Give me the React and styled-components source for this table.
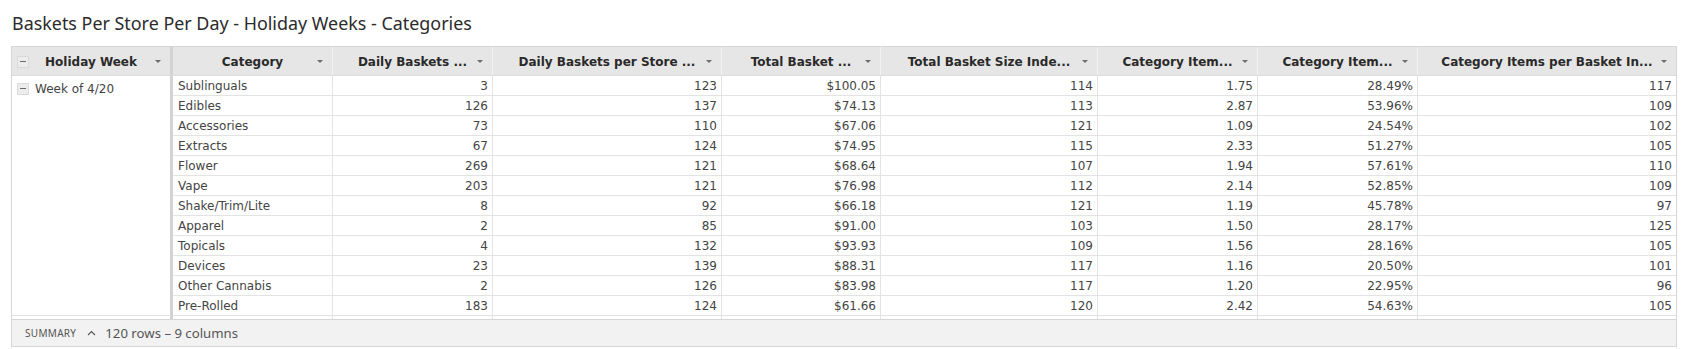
import React from "react";
import styled, { createGlobalStyle } from "styled-components";

const GlobalStyle = createGlobalStyle`
  html, body { margin: 0; padding: 0; background: #ffffff; }
  body { font-family: "DejaVu Sans", Verdana, sans-serif; }
`;

const COLS = [160, 160, 229, 159, 217, 160, 160, 258];

const columns = [
  { label: "Category" },
  { label: "Daily Baskets ..." },
  { label: "Daily Baskets per Store ..." },
  { label: "Total Basket ..." },
  { label: "Total Basket Size Inde..." },
  { label: "Category Item..." },
  { label: "Category Item..." },
  { label: "Category Items per Basket In..." },
];

const rows = [
  ["Sublinguals", "3", "123", "$100.05", "114", "1.75", "28.49%", "117"],
  ["Edibles", "126", "137", "$74.13", "113", "2.87", "53.96%", "109"],
  ["Accessories", "73", "110", "$67.06", "121", "1.09", "24.54%", "102"],
  ["Extracts", "67", "124", "$74.95", "115", "2.33", "51.27%", "105"],
  ["Flower", "269", "121", "$68.64", "107", "1.94", "57.61%", "110"],
  ["Vape", "203", "121", "$76.98", "112", "2.14", "52.85%", "109"],
  ["Shake/Trim/Lite", "8", "92", "$66.18", "121", "1.19", "45.78%", "97"],
  ["Apparel", "2", "85", "$91.00", "103", "1.50", "28.17%", "125"],
  ["Topicals", "4", "132", "$93.93", "109", "1.56", "28.16%", "105"],
  ["Devices", "23", "139", "$88.31", "117", "1.16", "20.50%", "101"],
  ["Other Cannabis", "2", "126", "$83.98", "117", "1.20", "22.95%", "96"],
  ["Pre-Rolled", "183", "124", "$61.66", "120", "2.42", "54.63%", "105"],
];

const Page = styled.div`
  padding: 11px 12px 0 11px;
  width: 1666px;
`;

const Title = styled.h1`
  margin: 0 0 11px 1px;
  font-family: "Noto Sans", "Open Sans", sans-serif;
  font-weight: 400;
  font-size: 17.9px;
  line-height: 24px;
  color: #2b2b2b;
`;

const Grid = styled.div`
  border: 1px solid #d6d6d6;
  width: 1664px;
  background: #fff;
`;

const HeaderRow = styled.div`
  display: flex;
  height: 28px;
  background: #e6e6e6;
  border-bottom: 1px solid #dcdcdc;
`;

const HeaderCell = styled.div`
  position: relative;
  flex: 0 0 ${(p) => p.$w}px;
  width: ${(p) => p.$w}px;
  box-sizing: border-box;
  display: flex;
  align-items: center;
  justify-content: center;
  padding: 2px 18px 0 18px;
  border-right: 1px solid #f2f2f2;
  font-family: "DejaVu Sans", sans-serif;
  font-weight: 700;
  font-size: 12px;
  color: #2a2a2a;
  white-space: nowrap;
  overflow: hidden;
  &:last-child { border-right: none; flex: 1 1 auto; }
`;

const FrozenHeader = styled(HeaderCell)`
  justify-content: flex-start;
  padding-left: 5px;
  padding-right: 0;
  border-right: none;
`;

const HeaderLabel = styled.span`
  flex: 1;
  text-align: center;
  padding-right: ${(p) => p.$shift || 0}px;
`;

const Caret = styled.span`
  position: absolute;
  right: 9px;
  top: 13px;
  width: 0;
  height: 0;
  border-left: 3px solid transparent;
  border-right: 3px solid transparent;
  border-top: 3px solid #6d6d6d;
`;

const Toggle = styled.span`
  flex: 0 0 auto;
  box-sizing: border-box;
  width: 12px;
  height: 12px;
  background: #ececec;
  border: 1px solid #dadada;
  position: relative;
  margin-top: ${(p) => p.$mt || 0}px;
  &::after {
    content: "";
    position: absolute;
    left: 2px;
    right: 2px;
    top: 4px;
    height: 1px;
    background: #6a6a6a;
  }
`;

const Separator = styled.div`
  flex: 0 0 3px;
  background: #d3d3d3;
`;

const Body = styled.div`
  display: flex;
  height: 243px;
  overflow: hidden;
`;

const FrozenColumn = styled.div`
  flex: 0 0 158px;
  width: 158px;
`;

const GroupCell = styled.div`
  display: flex;
  align-items: flex-start;
  gap: 6px;
  padding: 6px 0 0 5px;
  height: 233px;
  border-bottom: 1px solid #e3e3e3;
  font-size: 12px;
  color: #444;
  line-height: 14px;
`;

const DataArea = styled.div`
  flex: 1 1 auto;
  display: flex;
  flex-direction: column;
`;

const Row = styled.div`
  display: flex;
  height: 20px;
  flex: 0 0 20px;
`;

const Cell = styled.div`
  flex: 0 0 ${(p) => p.$w}px;
  width: ${(p) => p.$w}px;
  box-sizing: border-box;
  height: 20px;
  line-height: 20px;
  border-right: 1px solid #e3e3e3;
  border-bottom: 1px solid #e3e3e3;
  padding: 0 4px 0 ${(p) => (p.$left ? 5 : 4)}px;
  text-align: ${(p) => (p.$left ? "left" : "right")};
  font-size: 12px;
  color: #444;
  white-space: nowrap;
  overflow: hidden;
  &:last-child { border-right: none; flex: 1 1 auto; }
`;

const Summary = styled.div`
  display: flex;
  align-items: center;
  height: 26px;
  border-top: 1px solid #d6d6d6;
  background: #f2f2f2;
  padding: 0 0 0 13px;
`;

const SummaryLabel = styled.span`
  font-family: "Noto Sans", sans-serif;
  font-size: 10px;
  letter-spacing: 0.3px;
  color: #555;
  text-transform: uppercase;
`;

const Chevron = styled.svg`
  margin: 0 9px 0 11px;
  width: 9px;
  height: 6px;
`;

const SummaryText = styled.span`
  font-family: "Noto Sans", sans-serif;
  font-size: 13.2px;
  color: #555;
`;

export default function App() {
  return (
    <>
      <GlobalStyle />
      <Page>
        <Title>Baskets Per Store Per Day - Holiday Weeks - Categories</Title>
        <Grid>
          <HeaderRow>
            <FrozenHeader $w={158}>
              <Toggle $mt={-1} />
              <HeaderLabel $shift={17}>Holiday Week</HeaderLabel>
              <Caret />
            </FrozenHeader>
            <Separator />
            {columns.map((c, i) => (
              <HeaderCell key={i} $w={COLS[i]}>
                <HeaderLabel>{c.label}</HeaderLabel>
                <Caret />
              </HeaderCell>
            ))}
          </HeaderRow>
          <Body>
            <FrozenColumn>
              <GroupCell>
                <Toggle $mt={1} />
                <span>Week of 4/20</span>
              </GroupCell>
            </FrozenColumn>
            <Separator />
            <DataArea>
              {rows.map((r, ri) => (
                <Row key={ri}>
                  {r.map((v, ci) => (
                    <Cell key={ci} $w={COLS[ci]} $left={ci === 0}>
                      {v}
                    </Cell>
                  ))}
                </Row>
              ))}
              <Row>
                {COLS.map((w, ci) => (
                  <Cell key={ci} $w={w} $left={ci === 0} />
                ))}
              </Row>
            </DataArea>
          </Body>
          <Summary>
            <SummaryLabel>Summary</SummaryLabel>
            <Chevron viewBox="0 0 9 6">
              <path d="M1 5 L4.5 1.5 L8 5" fill="none" stroke="#555" strokeWidth="1.1" />
            </Chevron>
            <SummaryText>120 rows – 9 columns</SummaryText>
          </Summary>
        </Grid>
      </Page>
    </>
  );
}
